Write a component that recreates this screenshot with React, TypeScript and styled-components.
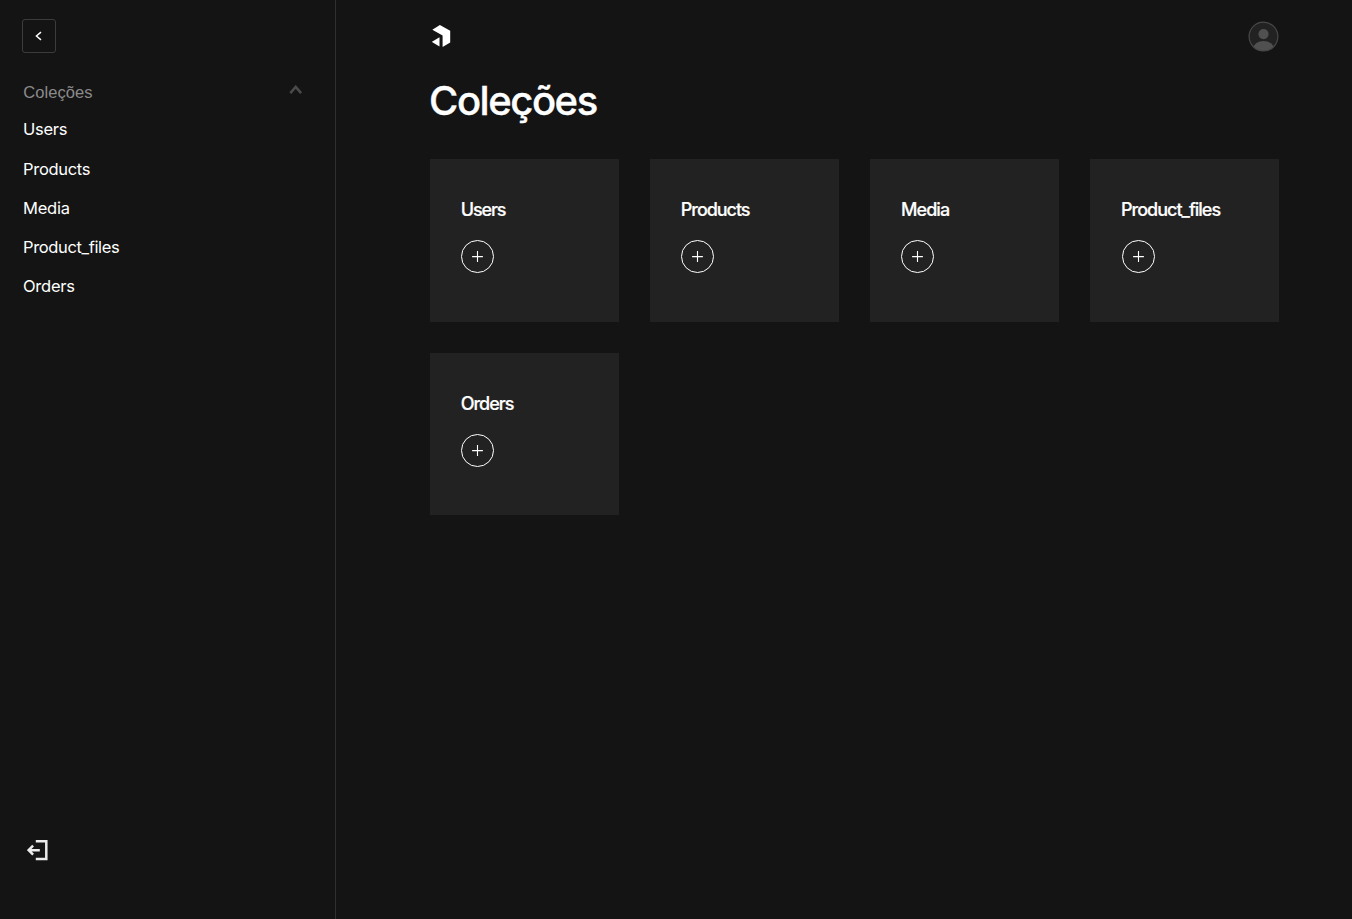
import React from "react";
import styled, { createGlobalStyle } from "styled-components";

const GlobalStyle = createGlobalStyle`
  * { box-sizing: border-box; }
  body {
    margin: 0;
    background: #141414;
    color: #fff;
    font-family: Inter, "Liberation Sans", sans-serif;
  }
  button { font: inherit; color: inherit; background: none; padding: 0; border: 0; }
  svg { display: block; }
`;

const Shell = styled.div`
  display: flex;
  height: 919px;
  overflow: hidden;
`;

const Sidebar = styled.aside`
  width: 336px;
  flex: none;
  display: flex;
  flex-direction: column;
  align-items: stretch;
  padding: 19px 32px 58px 22px;
  border-right: 1px solid #2f2f2f;
`;

const CollapseButton = styled.button`
  width: 34px;
  height: 34px;
  display: grid;
  place-items: center;
  border: 1px solid #3c3c3c;
  border-radius: 3px;
`;

const GroupToggle = styled.button`
  display: flex;
  justify-content: space-between;
  align-items: center;
  height: 20px;
  margin-top: 29px;
  padding-left: 1.3px;
  font-family: "Liberation Sans", Arial, sans-serif;
  font-size: 16.5px;
  letter-spacing: 0.05px;
  color: #8b8b8b;
`;

const ChevronBox = styled.span`
  margin-bottom: 4px;
`;

const NavList = styled.nav`
  display: flex;
  flex-direction: column;
  padding: 8.4px 0 0 1px;
`;

const NavLink = styled.a<{ $spacing: number }>`
  height: 39.2px;
  line-height: 39.2px;
  font-size: 16.5px;
  letter-spacing: ${(p) => p.$spacing}px;
`;

const LogoutButton = styled.button`
  width: 22px;
  height: 22px;
  margin: auto 0 0 5px;
`;

const Main = styled.main`
  flex: 1;
  padding: 21px 72.7px 0 94px;
`;

const TopBar = styled.header`
  display: flex;
  justify-content: space-between;
  height: 31px;
`;

const LogoBox = styled.div`
  padding: 4px 0 0 2px;
`;

const Title = styled.h1`
  margin: 24px 0 34px -1px;
  height: 49px;
  line-height: 49px;
  font-size: 40px;
  font-weight: 500;
  letter-spacing: -1.45px;
  -webkit-text-stroke: 0.35px #fff;
`;

const Grid = styled.div`
  display: grid;
  grid-template-columns: repeat(4, 1fr);
  gap: 31.2px;
`;

const Card = styled.article`
  height: 162.5px;
  padding: 39px 31.2px 0;
  background: #222;
`;

const CardTitle = styled.h2<{ $spacing: number }>`
  margin: 0 0 0 -0.5px;
  height: 24px;
  line-height: 24px;
  font-size: 18px;
  font-weight: 500;
  white-space: nowrap;
  letter-spacing: ${(p) => p.$spacing}px;
  -webkit-text-stroke: 0.2px #fff;
`;

const AddButton = styled.button`
  width: 33px;
  height: 33px;
  margin-top: 18px;
  display: grid;
  place-items: center;
  border: 1px solid #fff;
  border-radius: 50%;
`;

const collections = [
  { name: "Users", nav: -0.25, card: -1.1 },
  { name: "Products", nav: -0.3, card: -1.05 },
  { name: "Media", nav: -0.2, card: -0.9 },
  { name: "Product_files", nav: -0.36, card: -1 },
  { name: "Orders", nav: -0.25, card: -1.02 },
];

const ChevronLeft = () => (
  <svg width="8" height="10" viewBox="0 0 8 10" fill="none" stroke="#fff" strokeWidth="1.4">
    <path d="M6 1.1 1.4 5 6 8.9" />
  </svg>
);

const ChevronUp = () => (
  <svg width="14" height="10" viewBox="0 0 14 10" fill="none" stroke="#4a4a4a" strokeWidth="2.6">
    <path d="M1.3 8.1 6.7 1.9l5.4 6.2" />
  </svg>
);

const Logout = () => (
  <svg width="22" height="22" viewBox="0 0 22 22" fill="none" stroke="#ebebeb" strokeWidth="2.5">
    <path d="M8.8 2.3h10.5v17.8H8.8" />
    <path d="M12.8 11.2H2M6.1 6.7 1.6 11.2l4.5 4.5" />
  </svg>
);

const Logo = () => (
  <svg width="20" height="23" viewBox="0 0 20 23" fill="#fff">
    <path d="M7.9 0 18.2 5.8v11.6l-7.6 4.6V10.6L.3 4.7z" />
    <path d="M7.5 12.2v9.3L-.2 16.8z" />
  </svg>
);

const Avatar = () => (
  <svg width="31" height="31" viewBox="0 0 31 31">
    <defs>
      <clipPath id="avatar">
        <circle cx="15.5" cy="15.6" r="14.5" />
      </clipPath>
    </defs>
    <circle cx="15.5" cy="15.6" r="14.5" fill="#222" />
    <g fill="#505050" clipPath="url(#avatar)">
      <circle cx="15.5" cy="13.1" r="5.1" />
      <ellipse cx="15.5" cy="28" rx="10.5" ry="8" />
    </g>
    <circle cx="15.5" cy="15.6" r="14.4" fill="none" stroke="#484848" strokeWidth="1.2" />
  </svg>
);

const Plus = () => (
  <svg width="13" height="13" viewBox="0 0 13 13" fill="none" stroke="#fff" strokeWidth="1.1">
    <path d="M6.5 1.1v10.8M1.1 6.6h10.8" />
  </svg>
);

export default function App() {
  return (
    <Shell>
      <GlobalStyle />
      <Sidebar>
        <CollapseButton aria-label="Recolher">
          <ChevronLeft />
        </CollapseButton>
        <GroupToggle>
          Coleções
          <ChevronBox>
            <ChevronUp />
          </ChevronBox>
        </GroupToggle>
        <NavList>
          {collections.map((c) => (
            <NavLink key={c.name} $spacing={c.nav}>
              {c.name}
            </NavLink>
          ))}
        </NavList>
        <LogoutButton aria-label="Sair">
          <Logout />
        </LogoutButton>
      </Sidebar>
      <Main>
        <TopBar>
          <LogoBox>
            <Logo />
          </LogoBox>
          <Avatar />
        </TopBar>
        <Title>Coleções</Title>
        <Grid>
          {collections.map((c) => (
            <Card key={c.name}>
              <CardTitle $spacing={c.card}>{c.name}</CardTitle>
              <AddButton aria-label={`Criar ${c.name}`}>
                <Plus />
              </AddButton>
            </Card>
          ))}
        </Grid>
      </Main>
    </Shell>
  );
}
